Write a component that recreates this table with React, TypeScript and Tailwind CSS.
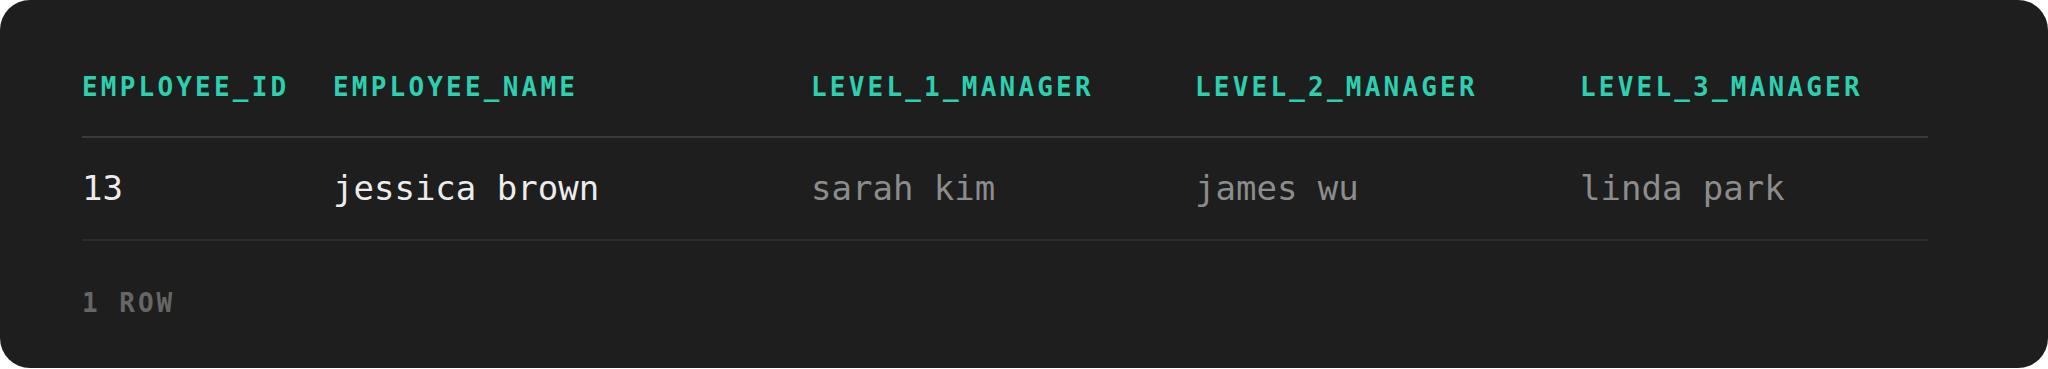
import React from 'react';

const columns = ['EMPLOYEE_ID', 'EMPLOYEE_NAME', 'LEVEL_1_MANAGER', 'LEVEL_2_MANAGER', 'LEVEL_3_MANAGER'];

const rows = [
  { id: '13', name: 'jessica brown', l1: 'sarah kim', l2: 'james wu', l3: 'linda park' },
];

const mono = { fontFamily: '"DejaVu Sans Mono", "Liberation Mono", monospace' };

const App: React.FC = () => {
  return (
    <div className="w-full h-[369px] bg-white">
      <div
        className="h-[368px] w-full rounded-[30px] bg-[#1e1e1e] pl-[82px] pr-[120px] pt-[74px]"
        style={mono}
      >
        <div className="grid grid-cols-[251px_478px_384px_385px_1fr] pb-[36px] border-b-2 border-[#3a3a3a]">
          {columns.map((c) => (
            <div key={c} className="text-[26px] leading-none font-bold tracking-[3.2px] text-[#2dcfae]">
              {c}
            </div>
          ))}
        </div>

        {rows.map((r) => (
          <div
            key={r.id}
            className="grid grid-cols-[251px_478px_384px_385px_1fr] pt-[33px] pb-[34px] border-b-2 border-[#2c2c2c] text-[34px] leading-none"
          >
            <div className="text-[#ececec]">{r.id}</div>
            <div className="text-[#ececec]">{r.name}</div>
            <div className="text-[#8c8c8c]">{r.l1}</div>
            <div className="text-[#8c8c8c]">{r.l2}</div>
            <div className="text-[#8c8c8c]">{r.l3}</div>
          </div>
        ))}

        <div className="mt-[49px] text-[26px] leading-none font-bold tracking-[3px] text-[#666666]">
          1 ROW
        </div>
      </div>
    </div>
  );
};

export default App;
